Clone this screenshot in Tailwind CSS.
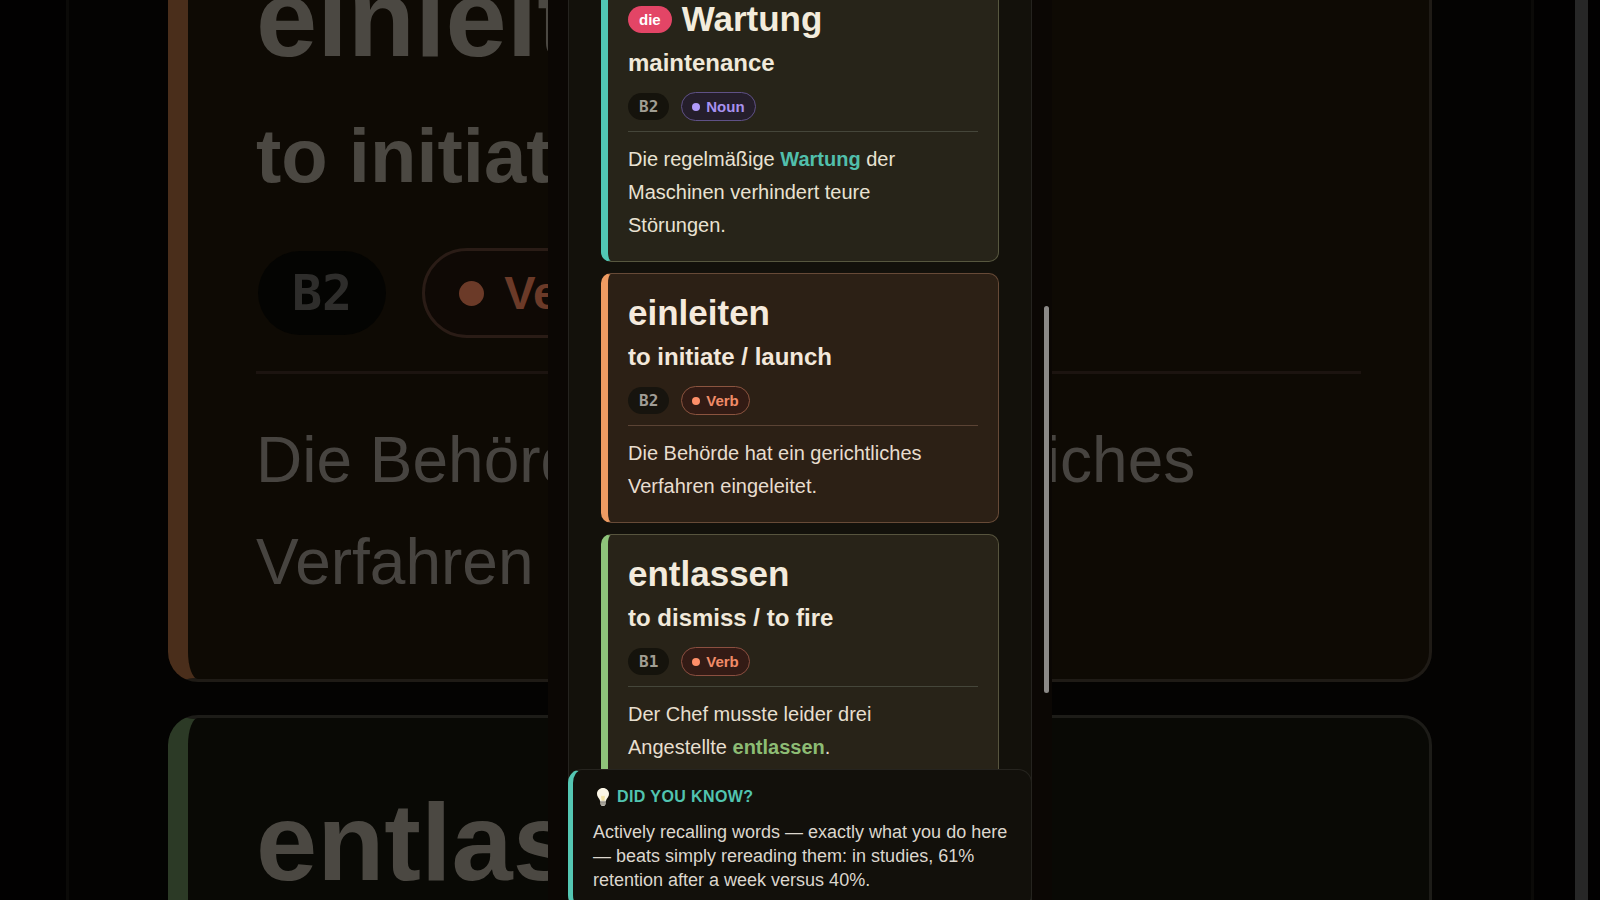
<!DOCTYPE html>
<html lang="en">
<head>
    <meta charset="UTF-8">
    <meta name="viewport" content="width=device-width, initial-scale=1.0">
    <title>German Vocabulary</title>
    <script src="https://cdn.jsdelivr.net/npm/@tailwindcss/browser@4"></script>
</head>
<body class="bg-black font-['Liberation_Sans',Arial,sans-serif]">
    <div class="relative h-screen overflow-hidden">

        <!-- Enlarged, dimmed copy of the list behind the app -->
        <div class="absolute inset-0 flex justify-center overflow-hidden bg-[#020101]" aria-hidden="true">
            <div class="w-full mx-[66px] px-[99px] border-x-3 border-[#0b0a08] bg-[#040302]">
                <div class="-mt-[109px] flex flex-col gap-[33px]">
                    <div class="rounded-[30px] border-3 border-l-20 border-[#1f1b16] border-l-[#4a2e1b] bg-[#0e0a04] px-[68px] pt-[61px] pb-[66px]">
                        <p class="text-[110px] leading-[126px] font-bold text-[#4b4842]">einleiten</p>
                        <p class="mt-[25px] text-[76px] leading-[100px] font-bold text-[#4b4842]">to initiate / launch</p>
                        <div class="mt-[42px] flex items-center gap-9 pl-0.5">
                            <span class="rounded-full bg-[#040402] px-[34px] leading-[84px] font-['DejaVu_Sans_Mono',monospace] text-[50px] font-bold text-[#2e2d2b]">B2</span>
                            <span class="flex items-center gap-5 rounded-full border-3 border-[#2a1c16] bg-[#0f0905] px-[34px] text-[47px] leading-[84px] font-bold text-[#6b3a28]">
                                <span class="size-[25px] rounded-full bg-[#6b3a28]"></span>Verb
                            </span>
                        </div>
                        <p class="mt-[33px] border-t-3 border-[#1c1410] pt-[35px] text-[64px] leading-[102px] text-[#474440]">Die Behörde hat ein gerichtliches Verfahren eingeleitet.</p>
                    </div>
                    <div class="rounded-[30px] border-3 border-l-20 border-[#1d1c18] border-l-[#2c3a26] bg-[#090905] px-[68px] pt-[61px] pb-[66px]">
                        <p class="text-[110px] leading-[126px] font-bold text-[#4b4842]">entlassen</p>
                        <p class="mt-[25px] text-[76px] leading-[100px] font-bold text-[#4b4842]">to dismiss / to fire</p>
                    </div>
                </div>
            </div>
            <div class="absolute inset-y-0 right-3 w-[13px] bg-[#272727]"></div>
        </div>

        <!-- App -->
        <main class="relative mx-auto h-full w-full max-w-[504px] bg-[#0b0704] px-5">
            <div class="h-full overflow-hidden border-x border-[#25231f] bg-[#13110b] px-8">
                <div class="-mt-[21px] flex flex-col gap-[11px]">

                    <article class="rounded-[10px] border border-l-7 border-[#57573f] border-l-[#51c8b5] bg-[#272419] px-5 py-[19px]">
                        <div class="flex items-center gap-[10px]">
                            <span class="rounded-full bg-[#e34566] px-[11px] text-[15px] leading-[27px] font-bold text-white">die</span>
                            <h2 class="text-[35px] leading-10 font-bold text-[#f3ecdc]">Wartung</h2>
                        </div>
                        <p class="mt-2 text-2xl font-bold text-[#f0e9da]">maintenance</p>
                        <div class="mt-[13px] flex items-center gap-3">
                            <span class="rounded-full bg-[#15130c] px-[11px] font-['DejaVu_Sans_Mono',monospace] text-base leading-[27px] font-bold text-[#a09d92]">B2</span>
                            <span class="flex items-center gap-[6px] rounded-full border border-[#5f5186] bg-[#251e2b] px-[10px] text-[15px] leading-[27px] font-bold text-[#a891ef]">
                                <span class="size-2 rounded-full bg-[#b19bfb]"></span>Noun
                            </span>
                        </div>
                        <div class="mt-[10px] border-t border-[#45463a] pt-[11px] pr-4">
                            <p class="text-xl leading-[33px] text-[#e9e2d2]">Die regelmäßige <strong class="text-[#51bfab]">Wartung</strong> der Maschinen verhindert teure Störungen.</p>
                        </div>
                    </article>

                    <article class="rounded-[10px] border border-l-7 border-[#674a37] border-l-[#ee9b62] bg-[#2c2015] px-5 py-[19px]">
                        <h2 class="text-[35px] leading-10 font-bold text-[#f5eadd]">einleiten</h2>
                        <p class="mt-2 text-2xl font-bold text-[#f3e8db]">to initiate / launch</p>
                        <div class="mt-[13px] flex items-center gap-3">
                            <span class="rounded-full bg-[#17140e] px-[11px] font-['DejaVu_Sans_Mono',monospace] text-base leading-[27px] font-bold text-[#a09d96]">B2</span>
                            <span class="flex items-center gap-[6px] rounded-full border border-[#8b543f] bg-[#321b14] px-[10px] text-[15px] leading-[27px] font-bold text-[#f08b68]">
                                <span class="size-2 rounded-full bg-[#ff8f69]"></span>Verb
                            </span>
                        </div>
                        <div class="mt-[10px] border-t border-[#5b4334] pt-[11px] pr-4">
                            <p class="text-xl leading-[33px] text-[#e8ddcf]">Die Behörde hat ein gerichtliches Verfahren eingeleitet.</p>
                        </div>
                    </article>

                    <article class="rounded-[10px] border border-l-7 border-[#57543e] border-l-[#8ec47a] bg-[#282318] px-5 py-[19px]">
                        <h2 class="text-[35px] leading-10 font-bold text-[#f3ebdd]">entlassen</h2>
                        <p class="mt-2 text-2xl font-bold text-[#f1e9db]">to dismiss / to fire</p>
                        <div class="mt-[13px] flex items-center gap-3">
                            <span class="rounded-full bg-[#15130c] px-[11px] font-['DejaVu_Sans_Mono',monospace] text-base leading-[27px] font-bold text-[#a09d92]">B1</span>
                            <span class="flex items-center gap-[6px] rounded-full border border-[#8b4f40] bg-[#331b15] px-[10px] text-[15px] leading-[27px] font-bold text-[#f08b68]">
                                <span class="size-2 rounded-full bg-[#ff8f69]"></span>Verb
                            </span>
                        </div>
                        <div class="mt-[10px] border-t border-[#45463a] pt-[11px] pr-4">
                            <p class="text-xl leading-[33px] text-[#e7dfcf]">Der Chef musste leider drei Angestellte <strong class="text-[#8dbc74]">entlassen</strong>.</p>
                        </div>
                    </article>
                </div>
            </div>

            <!-- Tip toast -->
            <aside class="absolute inset-x-5 -bottom-[9px] rounded-[14px] border border-l-5 border-[#26241f] border-l-[#54c6b3] bg-[#12100b] pt-[15px] pr-4 pb-4 pl-5">
                <h3 class="flex items-center gap-2 pl-1 text-base font-bold tracking-wide text-[#51c4b0]">
                    <svg class="h-[18px] w-3" viewBox="0 0 12 18" aria-hidden="true">
                        <path d="M6 0C2.6 0 0 2.5 0 5.7c0 2.4 1.4 3.8 2.3 5.2.5.8.7 1.5.8 2.3h5.8c.1-.8.3-1.5.8-2.3.9-1.4 2.3-2.8 2.3-5.2C12 2.5 9.4 0 6 0z" fill="#fbf6e6"/>
                        <path d="M4.6 12.8 4 7.6l1 .8 1-.8 1 .8 1-.8-.6 5.2z" fill="#f3e3a4"/>
                        <path d="M3.2 12.8h5.6v3.1L7.5 18h-3l-1.3-2.1z" fill="#b9b5ac"/>
                        <path d="M3.2 14.3h5.6M3.5 16h5" stroke="#827e76" stroke-width=".7"/>
                    </svg>
                    DID YOU KNOW?
                </h3>
                <p class="mt-[11px] text-lg leading-6 text-[#dcd7ce]">Actively recalling words — exactly what you do here — beats simply rereading them: in studies, 61% retention after a week versus 40%.</p>
            </aside>

            <!-- Scroll indicator -->
            <div class="absolute top-[34%] right-[3px] h-[43%] w-[5px] rounded-full bg-[#8b8987]"></div>
        </main>
    </div>
</body>
</html>
